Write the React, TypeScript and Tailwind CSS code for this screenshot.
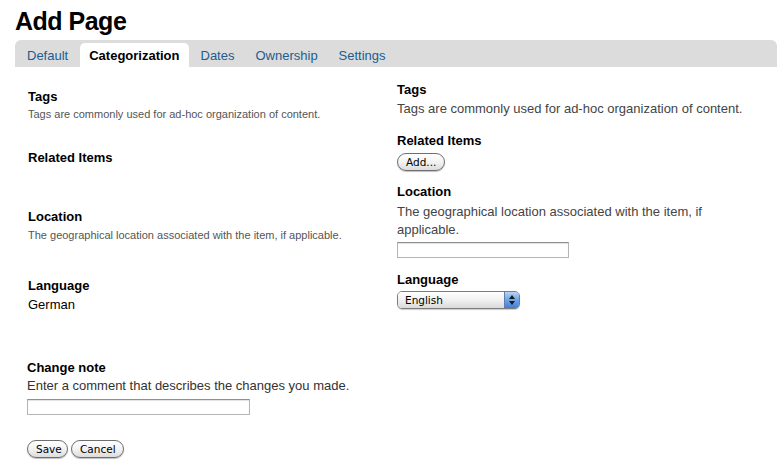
const aquaBtn =
  "h-[18px] rounded-full border border-[#6f6f6f] bg-gradient-to-b from-white via-[#f3f3f3] to-[#dcdcdc] px-[8px] font-['DejaVu_Sans',sans-serif] text-[10.5px] leading-[16px] text-black shadow-[0_1px_1px_rgba(0,0,0,0.25)]"

const textInput =
  "block h-[16px] border border-[#b5b5b5] border-t-[#8f8f8f] bg-white shadow-[inset_0_1px_1px_rgba(0,0,0,0.12)]"

export default function App() {
  return (
    <div className="h-[471px] w-[784px] overflow-hidden bg-white font-['Liberation_Sans',Arial,sans-serif] text-[13px] text-black">
      {/* Title */}
      <h1 className="pl-[15px] pt-[7px] text-[25px] font-bold leading-[28px] tracking-[-0.5px]">Add Page</h1>

      {/* Tabs */}
      <div className="ml-[15px] mr-[7px] mt-[5px] flex h-[27px] gap-[3px] rounded-t-[6px] bg-[#dcdcdc] px-[3px] pt-[3px]">
        <a className="px-[9px] leading-[25px] text-[#205c90]" href="#0">
          Default
        </a>
        <a className="rounded-t-[5px] bg-white px-[9px] font-bold leading-[25px] text-black" href="#0">
          Categorization
        </a>
        <a className="px-[9px] leading-[25px] text-[#205c90]" href="#0">
          Dates
        </a>
        <a className="px-[9px] leading-[25px] text-[#205c90]" href="#0">
          Ownership
        </a>
        <a className="px-[9px] leading-[25px] text-[#205c90]" href="#0">
          Settings
        </a>
      </div>

      {/* Two columns: translation source (left) and edit form (right) */}
      <div className="flex">
        {/* Left column */}
        <div className="ml-[28px] w-[356px]">
          <div className="mt-[21px]">
            <div className="font-bold leading-[18px]">Tags</div>
            <div className="mt-[1px] text-[11px] leading-[15px] text-[#555]">
              Tags are commonly used for ad-hoc organization of content.
            </div>
          </div>
          <div className="mt-[27px]">
            <div className="font-bold leading-[18px]">Related Items</div>
          </div>
          <div className="mt-[41px]">
            <div className="font-bold leading-[18px]">Location</div>
            <div className="mt-[2px] text-[11px] leading-[15px] text-[#555]">
              The geographical location associated with the item, if applicable.
            </div>
          </div>
          <div className="mt-[34px]">
            <div className="font-bold leading-[18px]">Language</div>
            <div className="mt-[1px] leading-[18px]">German</div>
          </div>
        </div>

        {/* Right column */}
        <div className="ml-[13px] w-[360px]">
          <div className="mt-[14px]">
            <div className="font-bold leading-[18px]">Tags</div>
            <div className="mt-[1px] leading-[18px] text-[#444]">
              Tags are commonly used for ad-hoc organization of content.
            </div>
          </div>
          <div className="mt-[14px]">
            <div className="font-bold leading-[18px]">Related Items</div>
            <button className={aquaBtn + " mt-[3px] block w-[48px]"}>Add...</button>
          </div>
          <div className="mt-[12px]">
            <div className="font-bold leading-[18px]">Location</div>
            <div className="mt-[2px] leading-[18px] text-[#444]">
              The geographical location associated with the item, if applicable.
            </div>
            <input className={textInput + " mt-[3px] w-[172px]"} type="text" />
          </div>
          <div className="mt-[13px]">
            <div className="font-bold leading-[18px]">Language</div>
            <div className="mt-[2px] flex h-[18px] w-[123px] overflow-hidden rounded-[5px] border border-[#7d7d7d] shadow-[0_1px_1px_rgba(0,0,0,0.2)]">
              <span className="flex-1 bg-gradient-to-b from-white via-[#f1f1f1] to-[#dadada] pl-[7px] font-['DejaVu_Sans',sans-serif] text-[10.5px] leading-[16px]">
                English
              </span>
              <span className="flex w-[15px] flex-col items-center justify-center gap-[2px] border-l border-[#5f7fae] bg-gradient-to-b from-[#b9d3f3] via-[#6fa3e6] to-[#3f7fd6]">
                <svg width="6" height="4" viewBox="0 0 6 4">
                  <path d="M0 4 L3 0 L6 4 Z" fill="#1a1a1a" />
                </svg>
                <svg width="6" height="4" viewBox="0 0 6 4">
                  <path d="M0 0 L3 4 L6 0 Z" fill="#1a1a1a" />
                </svg>
              </span>
            </div>
          </div>
        </div>
      </div>

      {/* Change note */}
      <div className="ml-[27px] mt-[45px]">
        <div className="font-bold leading-[18px]">Change note</div>
        <div className="leading-[17px] text-[#333]">Enter a comment that describes the changes you made.</div>
        <input className={textInput + " mt-[5px] w-[223px]"} type="text" />
        <div className="mt-[25px] flex gap-[3px]">
          <button className={aquaBtn + " w-[41px] px-0"}>Save</button>
          <button className={aquaBtn + " w-[53px] px-0"}>Cancel</button>
        </div>
      </div>
    </div>
  )
}
